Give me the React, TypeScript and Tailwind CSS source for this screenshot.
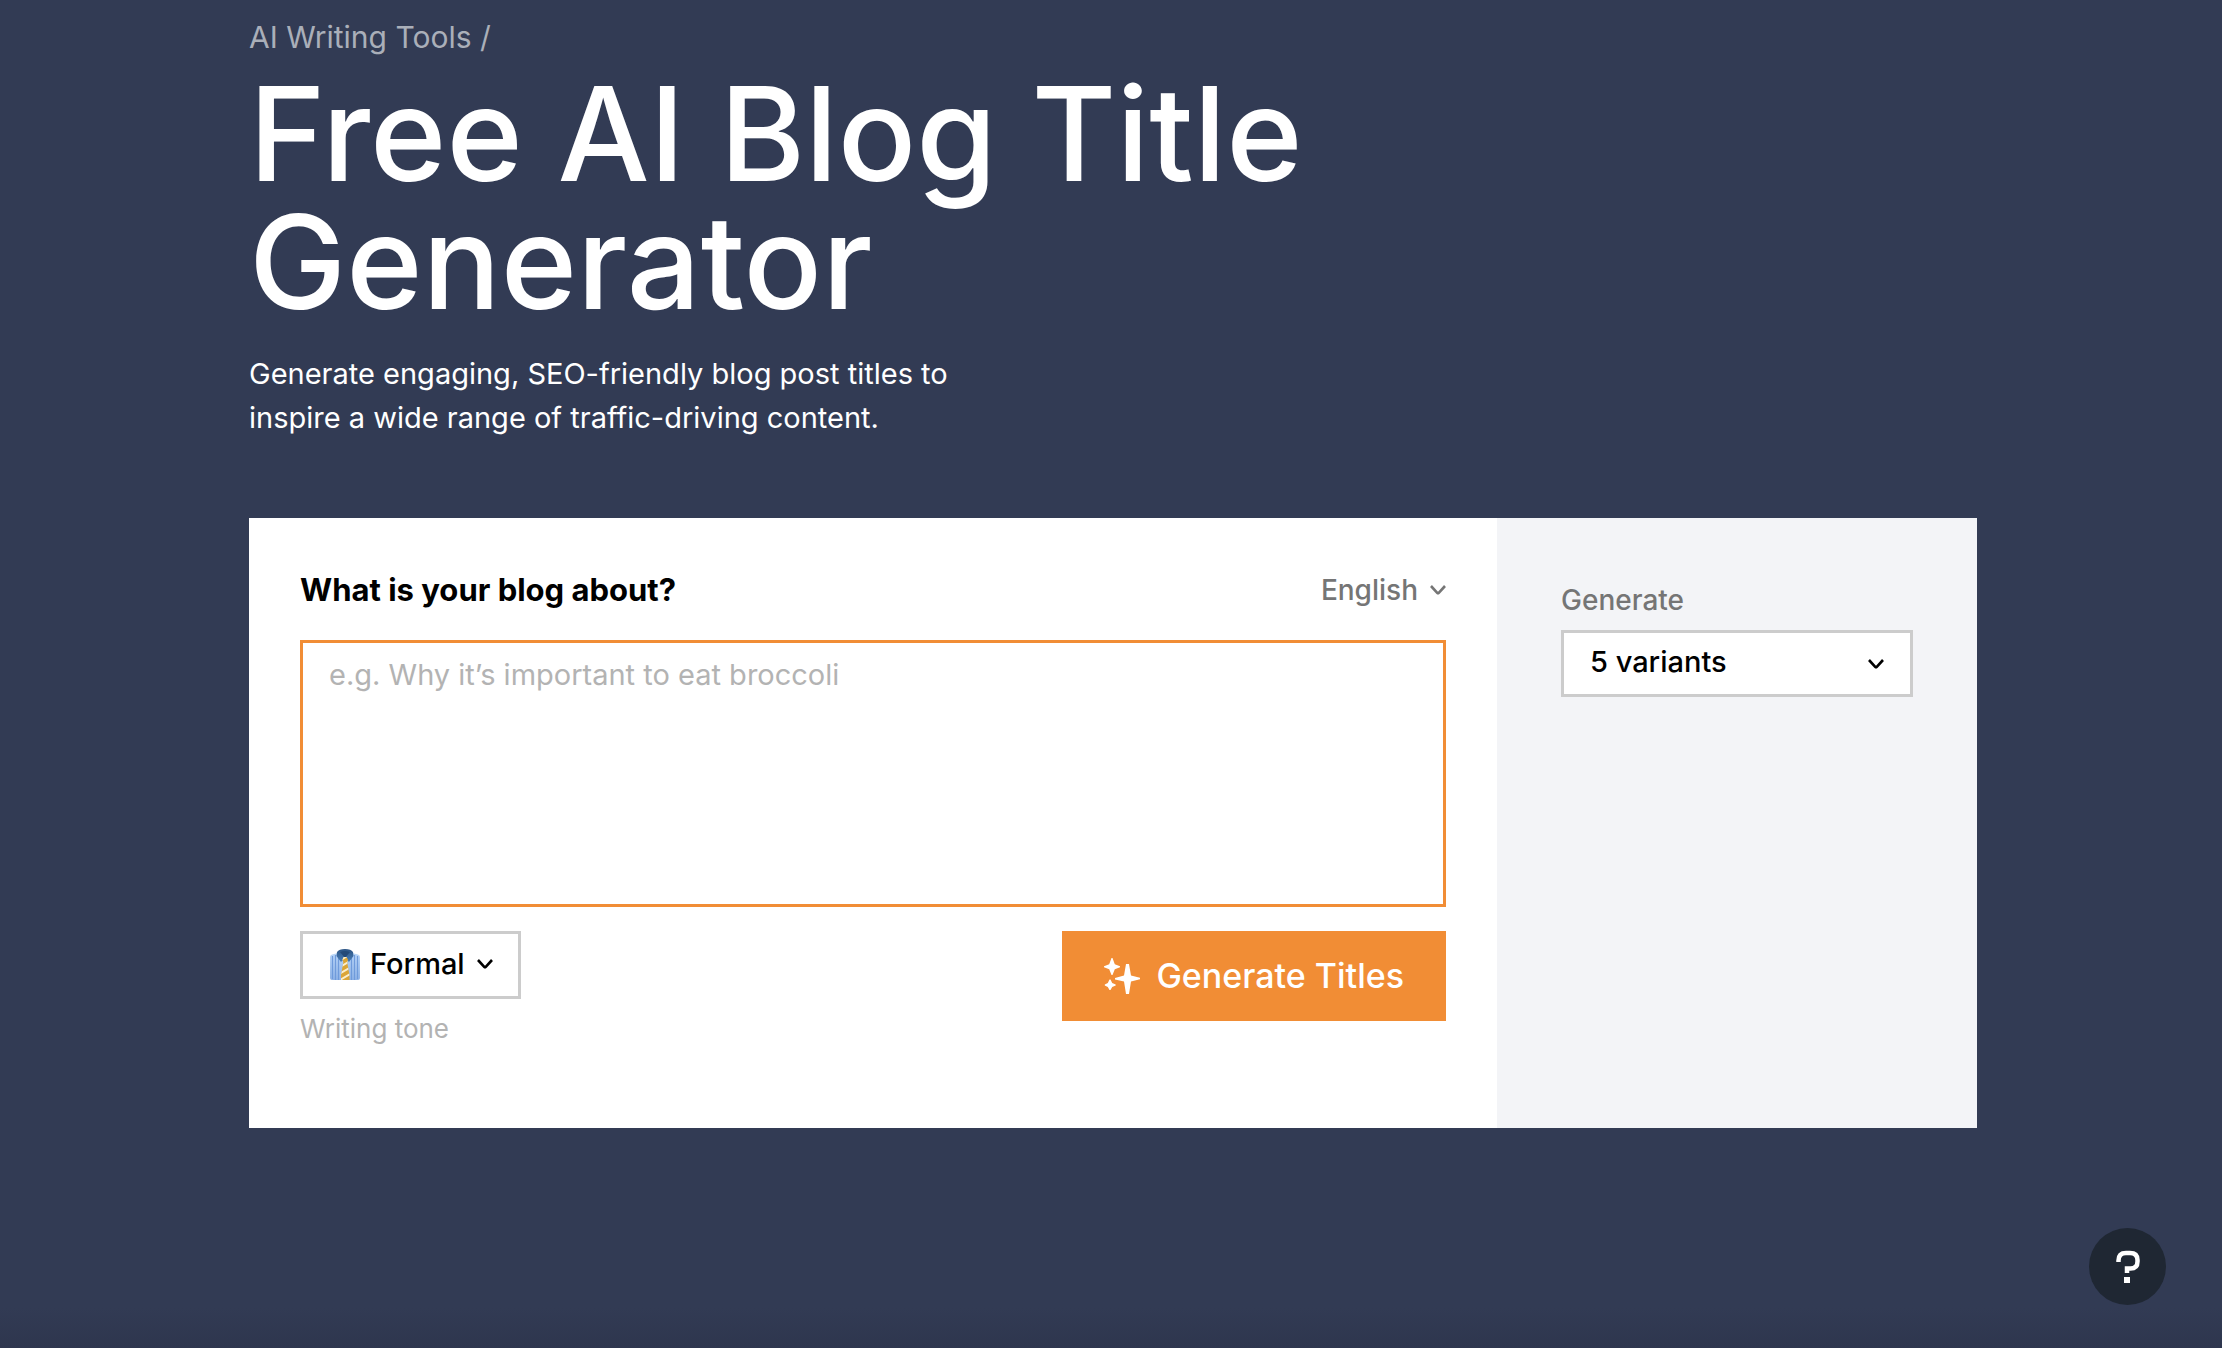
import React, { useState } from 'react';

const languages = ['English', 'French', 'German', 'Spanish'];
const tones = ['Formal', 'Friendly', 'Casual'];
const variants = ['3 variants', '5 variants', '10 variants'];

function Chevron({ className = '' }: { className?: string }) {
  return (
    <svg
      viewBox="0 0 16 10"
      fill="none"
      stroke="currentColor"
      strokeWidth="2.6"
      aria-hidden="true"
      className={`pointer-events-none h-[10px] w-4 shrink-0 ${className}`}
    >
      <path d="M1 1l6.2 6.800q.8.8 1.6 0L15 1" />
    </svg>
  );
}

function ShirtIcon() {
  return (
    <svg viewBox="0 0 30 31" aria-hidden="true" className="pointer-events-none h-[31px] w-[30px] shrink-0">
      <defs>
        <linearGradient id="cloth" x1="0" y1="0" x2="0" y2="1">
          <stop offset="0" stopColor="#b9d6f8" />
          <stop offset="1" stopColor="#8fb3e6" />
        </linearGradient>
        <linearGradient id="collar" x1="0" y1="0" x2="0" y2="1">
          <stop offset="0" stopColor="#2c5484" />
          <stop offset="1" stopColor="#4a7fb8" />
        </linearGradient>
        <clipPath id="tie">
          <path d="M13.500 8h3l1.500 2.500-.8 3L19.500 26v5h-8.500v-5l2.300-12.500-.8-3z" />
        </clipPath>
      </defs>
      <path d="M2 5.500l6-1.500h14l6 1.500q2 .5 2 2.500v21q0 2-2 2H2q-2 0-2-2V8q0-2 2-2.500z" fill="url(#cloth)" />
      <path d="M2.500 7v23M5.500 6v25M8.500 8v23M21.500 8v23M24.500 6v25M27.500 7v23" stroke="#6f9bdb" strokeWidth="1.200" />
      <path d="M7 3Q9 0 15 0t8 3l.5 4-4.500 6-4-4-4 4-4.500-6z" fill="url(#collar)" />
      <path d="M10 3Q15 1.200 20 3L15 9z" fill="#244a78" />
      <g clipPath="url(#tie)">
        <rect x="9" y="7" width="12" height="24" fill="#dba536" />
        <path d="M9 12l10-6M9 18.500l12-7M9 25l12-7M9 31.500l12-7" stroke="#fbeecb" strokeWidth="2" />
      </g>
    </svg>
  );
}

function SparklesIcon() {
  return (
    <svg viewBox="0 0 36 36" fill="currentColor" aria-hidden="true" className="size-9 shrink-0">
      <path d="M22 6h3l2 11.500 9.500 2.500v1L27 23.500 25 36h-3l-2-12.500L11 21.500v-1.500l9-2.500z" />
      <path d="M7.500 0h1l2.300 6.200L16 8.200v1l-5.200 2L8.500 17h-1l-2.300-5.800L0 9.200v-1l5.200-2z" />
      <path d="M5.500 21.500h1l1.700 3.500 3.500 1.500v1l-3.500 1.500L6.500 32h-1l-1.700-3-3-1.500v-1l3-1.500z" />
    </svg>
  );
}

export default function App() {
  const [topic, setTopic] = useState('');
  const [language, setLanguage] = useState('English');
  const [tone, setTone] = useState('Formal');
  const [count, setCount] = useState('5 variants');

  return (
    <div className="min-h-screen bg-[#323b54] bg-linear-to-t from-[#2e364e] via-[#323b54] via-3% to-[#323b54] pl-1 font-['Inter',sans-serif]">
      <main className="mx-auto w-full max-w-[1728px] pt-4">
        <header className="text-white">
          <nav aria-label="Breadcrumb" className="text-[30px] leading-[42px] text-[#aaafb9]">
            <a href="#">AI Writing Tools</a> /
          </nav>
          <h1 className="mt-3 max-w-[1200px] text-[130px] leading-[128px] font-medium">
            Free AI Blog Title Generator
          </h1>
          <p className="mt-[26px] max-w-[720px] text-[29px] leading-[44px]">
            Generate engaging, SEO-friendly blog post titles to inspire a wide range of traffic-driving content.
          </p>
        </header>

        <form
          onSubmit={(e) => e.preventDefault()}
          className="mt-[78px] flex min-h-[610px] bg-white text-[29px] leading-9 text-black"
        >
          <section className="flex-1 px-[51px] pt-[54px] pb-20">
            <div className="flex items-center justify-between">
              <label htmlFor="topic" className="text-[31px] font-bold">What is your blog about?</label>
              <div className="flex items-center text-[28px] font-medium text-[#757575]">
                <select
                  aria-label="Language"
                  value={language}
                  onChange={(e) => setLanguage(e.target.value)}
                  className="-mr-4 field-sizing-content appearance-none bg-transparent pr-7"
                >
                  {languages.map((l) => <option key={l}>{l}</option>)}
                </select>
                <Chevron />
              </div>
            </div>

            <textarea
              id="topic"
              value={topic}
              onChange={(e) => setTopic(e.target.value)}
              placeholder="e.g. Why it’s important to eat broccoli"
              className="mt-8 block h-[267px] w-full resize-none border-3 border-[#f18d35] px-[26px] py-3.5 outline-none placeholder:text-[#b3b3b3]"
            />

            <div className="mt-6 flex items-start justify-between">
              <div>
                <div className="flex h-[68px] w-fit items-center border-3 border-[#cccccc] pr-[25px] pb-0.5 pl-[27px]">
                  <ShirtIcon />
                  <select
                    id="tone"
                    value={tone}
                    onChange={(e) => setTone(e.target.value)}
                    className="-mr-4 field-sizing-content appearance-none bg-transparent pr-7 pl-2.5 font-medium"
                  >
                    {tones.map((t) => <option key={t}>{t}</option>)}
                  </select>
                  <Chevron />
                </div>
                <label htmlFor="tone" className="mt-3 block text-[26px] text-[#b3b3b3]">Writing tone</label>
              </div>
              <button
                type="submit"
                className="flex h-[90px] items-center gap-4 bg-[#f18d35] px-[42px] text-[34px] font-medium text-white"
              >
                <SparklesIcon />
                Generate Titles
              </button>
            </div>
          </section>

          <aside className="w-[480px] bg-[#f3f4f7] px-16 pt-16">
            <label htmlFor="count" className="block text-[28px] font-medium text-[#757575]">Generate</label>
            <div className="mt-3 flex h-[67px] items-center border-3 border-[#cccccc] bg-white pr-[26px]">
              <select
                id="count"
                value={count}
                onChange={(e) => setCount(e.target.value)}
                className="-mr-4 h-full min-w-0 flex-1 appearance-none bg-transparent pr-7 pb-1 pl-[26px] font-medium"
              >
                {variants.map((v) => <option key={v}>{v}</option>)}
              </select>
              <Chevron />
            </div>
          </aside>
        </form>
      </main>

      <button
        type="button"
        aria-label="Help"
        className="fixed right-14 bottom-[43px] flex size-[77px] items-center justify-center rounded-full bg-[#1f2733] text-white"
      >
        <svg viewBox="0 0 24 34" aria-hidden="true" className="h-[34px] w-6">
          <path
            d="M2.500 12V10.500Q2.500 3 10 3h4Q21.500 3 21.500 10v1.500Q21.500 18.500 14.500 18.500H11V23"
            fill="none"
            stroke="currentColor"
            strokeWidth="4.500"
          />
          <rect x="8" y="27" width="6" height="6" fill="currentColor" />
        </svg>
      </button>
    </div>
  );
}
